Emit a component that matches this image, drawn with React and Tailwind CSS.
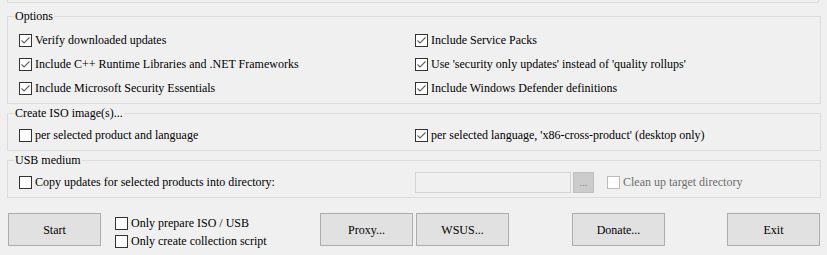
import React from 'react'

function Box({ checked, disabled }) {
  return (
    <svg width="13" height="13" viewBox="0 0 13 13" className="shrink-0">
      <rect x="0.5" y="0.5" width="12" height="12" fill="#ffffff" stroke={disabled ? '#bcbcbc' : '#333333'} />
      {checked && <polyline points="2.5,6.5 5,9 10.5,3.5" fill="none" stroke="#606060" strokeWidth="1.1" />}
    </svg>
  )
}

function Check({ label, checked, disabled }) {
  return (
    <label className={`flex items-center gap-[3px] h-[24px] ${disabled ? 'text-[#6d6d6d]' : 'text-black'}`}>
      <Box checked={checked} disabled={disabled} />
      <span className="whitespace-nowrap">{label}</span>
    </label>
  )
}

function Group({ title, className, children }) {
  return (
    <fieldset className={`mx-[7px] border border-[#dcdcdc] ${className}`}>
      <legend className="ml-[6px] px-[1px] leading-[14px]">{title}</legend>
      {children}
    </fieldset>
  )
}

function Btn({ children, className }) {
  return (
    <button className={`w-[93px] h-[33px] bg-[#e1e1e1] border border-[#adadad] text-black ${className}`}>
      {children}
    </button>
  )
}

export default function App() {
  return (
    <div className="w-[827px] h-[255px] bg-[#f0f0f0] text-[12px] text-black overflow-hidden font-['Liberation_Serif','Times_New_Roman',serif]">
      {/* bottom edge of the panel above */}
      <div className="mx-[7px] w-[812px] h-[3px] border-x border-b border-[#dcdcdc]" />

      <Group title="Options" className="mt-[6px] w-[814px] pt-[5px] pb-[3px]">
        <div className="grid grid-cols-[396px_1fr] pl-[11px]">
          <Check checked label="Verify downloaded updates" />
          <Check checked label="Include Service Packs" />
          <Check checked label="Include C++ Runtime Libraries and .NET Frameworks" />
          <Check checked label="Use 'security only updates' instead of 'quality rollups'" />
          <Check checked label="Include Microsoft Security Essentials" />
          <Check checked label="Include Windows Defender definitions" />
        </div>
      </Group>

      <Group title="Create ISO image(s)..." className="mt-[2px] w-[814px] pt-[3px] pb-[3px]">
        <div className="grid grid-cols-[396px_1fr] pl-[11px]">
          <Check label="per selected product and language" />
          <Check checked label="per selected language, 'x86-cross-product' (desktop only)" />
        </div>
      </Group>

      <Group title="USB medium" className="mt-[2px] w-[814px] pt-[3px] pb-[3px]">
        <div className="grid grid-cols-[396px_1fr] pl-[11px]">
          <Check label="Copy updates for selected products into directory:" />
          <div className="flex items-center h-[24px]">
            <div className="w-[156px] h-[21px] border border-[#d4d4d4] bg-[#f0f0f0]" />
            <div className="ml-[2px] w-[21px] h-[21px] bg-[#cccccc] border border-[#bfbfbf] text-[#838383] text-[10px] flex items-center justify-center">...</div>
            <div className="ml-[13px]">
              <Check disabled label="Clean up target directory" />
            </div>
          </div>
        </div>
      </Group>

      <div className="flex items-start mt-[15px] pl-[8px]">
        <Btn>Start</Btn>
        <div className="ml-[14px] flex flex-col leading-[18px] pt-[1px]">
          <label className="flex items-center gap-[3px]"><Box /><span>Only prepare ISO / USB</span></label>
          <label className="flex items-center gap-[3px]"><Box /><span>Only create collection script</span></label>
        </div>
        <Btn className="ml-auto">Proxy...</Btn>
        <Btn className="ml-[3px]">WSUS...</Btn>
        <Btn className="ml-[63px]">Donate...</Btn>
        <Btn className="ml-[62px] mr-[7px]">Exit</Btn>
      </div>
    </div>
  )
}
